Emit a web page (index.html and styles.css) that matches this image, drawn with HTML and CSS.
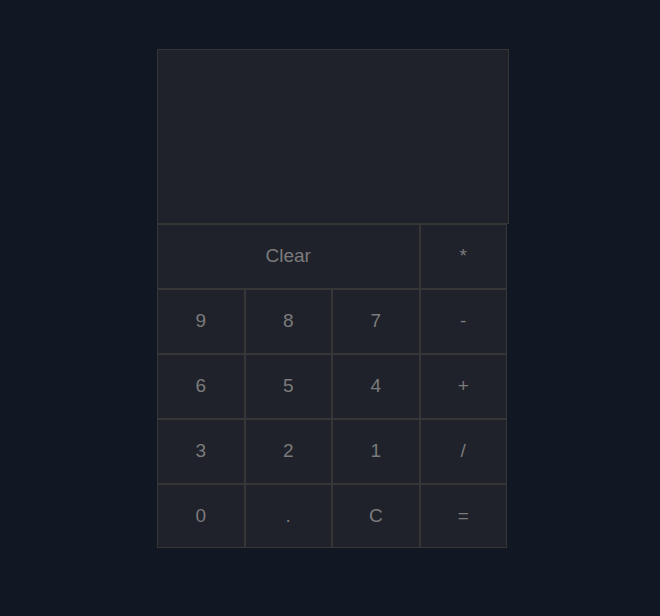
FILE: index.html
```html
<!DOCTYPE html>
<html>
<head>
<meta charset="utf-8">
<link rel="stylesheet" href="styles.css">
</head>
<body>
<div class="calc">
  <div class="display"></div>
  <div class="keys">
    <button class="key wide">Clear</button>
    <button class="key">*</button>
    <button class="key">9</button>
    <button class="key">8</button>
    <button class="key">7</button>
    <button class="key">-</button>
    <button class="key">6</button>
    <button class="key">5</button>
    <button class="key">4</button>
    <button class="key">+</button>
    <button class="key">3</button>
    <button class="key">2</button>
    <button class="key">1</button>
    <button class="key">/</button>
    <button class="key">0</button>
    <button class="key">.</button>
    <button class="key">C</button>
    <button class="key">=</button>
  </div>
</div>
</body>
</html>
```
FILE: styles.css
```css
html, body {
  margin: 0;
  padding: 0;
  background: #121823;
  height: 100%;
}
body {
  font-family: "Liberation Sans", Arial, sans-serif;
}
.calc {
  padding: 49px 0 0 157px;
  width: 352px;
}
.display {
  box-sizing: border-box;
  width: 352px;
  height: 175px;
  background: #1f222b;
  border: 1px solid #353535;
}
.keys {
  display: grid;
  grid-template-columns: repeat(4, 87.5px);
  grid-template-rows: 65px 65px 65px 65px 64px;
  width: 350px;
}
.key {
  box-sizing: border-box;
  margin: 0;
  padding: 0 0 1px;
  background: #1f222b;
  border: 1px solid #363636;
  color: #7b7b7b;
  font-family: "Liberation Sans", Arial, sans-serif;
  font-size: 19px;
}
.wide {
  grid-column: span 3;
}
```
